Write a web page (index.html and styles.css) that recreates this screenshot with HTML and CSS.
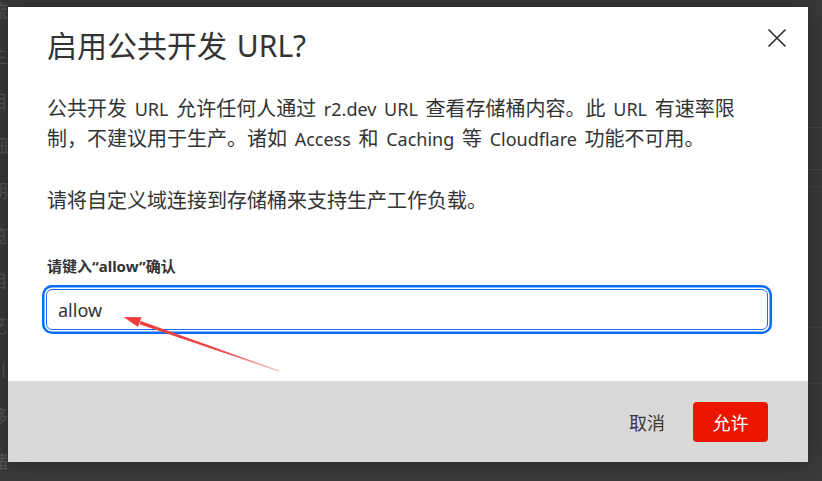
FILE: index.html
```html
<!DOCTYPE html>
<html lang="zh-CN">
<head>
<meta charset="utf-8">
<title>启用公共开发 URL?</title>
<link rel="stylesheet" href="styles.css">
</head>
<body>
<div class="backdrop">
  <div class="back-left">
    <div class="bl-row">流</div>
    <div class="bl-row">主</div>
    <div class="bl-row">目</div>
    <div class="bl-row">细</div>
    <div class="bl-row">胡</div>
    <div class="bl-row">览</div>
    <div class="bl-row">目</div>
    <div class="bl-row">艺</div>
    <div class="bl-row">ol</div>
    <div class="bl-row">移</div>
    <div class="bl-row">储</div>
  </div>
  <div class="back-right">
    <div class="br-top"></div>
    <div class="br-cell"><span class="mono">ar</span></div>
    <div class="br-gap"></div>
    <div class="br-block"></div>
    <div class="br-block2"></div>
  </div>
</div>

<div class="overlay">
  <div class="modal">
    <div class="modal-main">
      <div class="modal-head">
        <h2 class="modal-title">启用公共开发 URL?</h2>
        <button class="close-btn" aria-label="关闭">
          <svg width="20" height="20" viewBox="0 0 20 20"><path d="M1.5 1.5 L18.5 18.5 M18.5 1.5 L1.5 18.5" stroke="#2b2b2b" stroke-width="1.6" fill="none"/></svg>
        </button>
      </div>
      <p class="desc">公共开发<span class="en"> URL </span>允许任何人通过<span class="en"> r2.dev URL </span>查看存储桶内容。此<span class="en"> URL </span>有速率限制，不建议用于生产。诸如<span class="en"> Access </span>和<span class="en"> Caching </span>等<span class="en"> Cloudflare </span>功能不可用。</p>
      <p class="desc second">请将自定义域连接到存储桶来支持生产工作负载。</p>
      <label class="field-label" for="confirm">请键入“allow”确认</label>
      <div class="input-wrap">
        <input id="confirm" class="text-input" type="text" value="allow">
      </div>
    </div>
    <div class="modal-foot">
      <button class="btn-cancel">取消</button>
      <button class="btn-allow">允许</button>
    </div>
  </div>
</div>

<svg class="annot" width="822" height="481" viewBox="0 0 822 481">
  <defs>
    <linearGradient id="fade" x1="279" y1="371" x2="125" y2="318" gradientUnits="userSpaceOnUse">
      <stop offset="0" stop-color="#f36a6a" stop-opacity="0.5"/>
      <stop offset="0.4" stop-color="#ef4444"/>
      <stop offset="1" stop-color="#ee3b3b"/>
    </linearGradient>
  </defs>
  <polygon points="279.2,370.6 278.8,371.4 139.6,324.2 140.6,320.9" fill="url(#fade)"/>
  <polygon points="123.5,317 141.5,317.2 138,327" fill="#ee3b3b"/>
</svg>
</body>
</html>
```

FILE: styles.css
```css
* { box-sizing: border-box; }

html, body {
  margin: 0;
  padding: 0;
  width: 822px;
  height: 481px;
  overflow: hidden;
}

body {
  background: #3a3a3a;
  font-family: "Noto Sans", "Noto Sans CJK SC", sans-serif;
  position: relative;
}

.backdrop {
  display: flex;
  width: 822px;
  height: 481px;
}

.back-left {
  margin-top: -12px;
  margin-left: -10px;
  display: flex;
  flex-direction: column;
}

.bl-row {
  height: 45px;
  line-height: 45px;
  font-size: 18px;
  color: #575757;
  font-family: "Noto Sans CJK SC", sans-serif;
}

.back-right {
  margin-left: auto;
  width: 30px;
  display: flex;
  flex-direction: column;
}

.br-top {
  height: 127px;
}

.br-cell {
  height: 43px;
  border-top: 1px solid #454545;
  border-bottom: 1px solid #454545;
  display: flex;
  align-items: center;
}

.mono {
  font-family: "Liberation Mono", monospace;
  font-size: 14px;
  color: #6a6a6a;
}

.br-gap {
  height: 17px;
  border-bottom: 1px solid #414141;
}

.br-block {
  height: 141px;
  border-bottom: 1px solid #444;
}

.br-block2 {
  height: 56px;
  border-bottom: 1px solid #444;
}

.overlay {
  position: absolute;
  inset: 0;
  padding: 7px 14px 19px 8px;
}

.modal {
  width: 800px;
  height: 455px;
  background: #fff;
  display: flex;
  flex-direction: column;
  box-shadow: 0 0 24px rgba(0, 0, 0, 0.35);
}

.modal-main {
  flex: 1;
  padding: 19px 21px 0 39px;
}

.modal-head {
  display: flex;
  align-items: flex-start;
  justify-content: space-between;
}

.modal-title {
  margin: 0;
  font-size: 30px;
  line-height: 40px;
  font-weight: 400;
  color: #333;
  word-spacing: 2px;
}

.close-btn {
  margin-top: 2px;
  width: 20px;
  height: 20px;
  padding: 0;
  border: 0;
  background: none;
  display: flex;
}

.desc {
  margin: 28px 0 0;
  width: 700px;
  font-size: 20px;
  line-height: 30px;
  color: #333;
}

.en {
  font-size: 18px;
  word-spacing: 3px;
}

.desc.second {
  margin-top: 32px;
}

.field-label {
  display: block;
  margin-top: 40px;
  font-size: 15px;
  line-height: 20px;
  font-weight: 700;
  color: #333;
}

.input-wrap {
  margin-top: 13px;
  width: 722px;
}

.text-input {
  display: block;
  width: 722px;
  height: 41px;
  margin-left: -1px;
  padding: 0 11px;
  border: 1px solid #1a6cff;
  border-radius: 6px;
  font-family: "Noto Sans", "Noto Sans CJK SC", sans-serif;
  font-size: 18px;
  color: #333;
  outline: none;
  box-shadow: 0 0 0 1.5px #fff, 0 0 0 4px #0b6dff;
}

.modal-foot {
  height: 81px;
  background: #d9d9d9;
  display: flex;
  align-items: center;
  justify-content: flex-end;
  gap: 13px;
  padding: 0 40px 0 0;
}

.btn-cancel {
  border: 0;
  background: none;
  font-family: "Noto Sans CJK SC", sans-serif;
  font-size: 18px;
  color: #3a3a3a;
  padding: 0 15px;
  height: 40px;
}

.btn-allow {
  width: 75px;
  height: 40px;
  border: 0;
  border-radius: 4px;
  background: #ec1500;
  color: #fff;
  font-family: "Noto Sans CJK SC", sans-serif;
  font-size: 18px;
}

.annot {
  position: absolute;
  left: 0;
  top: 0;
  pointer-events: none;
}
```
